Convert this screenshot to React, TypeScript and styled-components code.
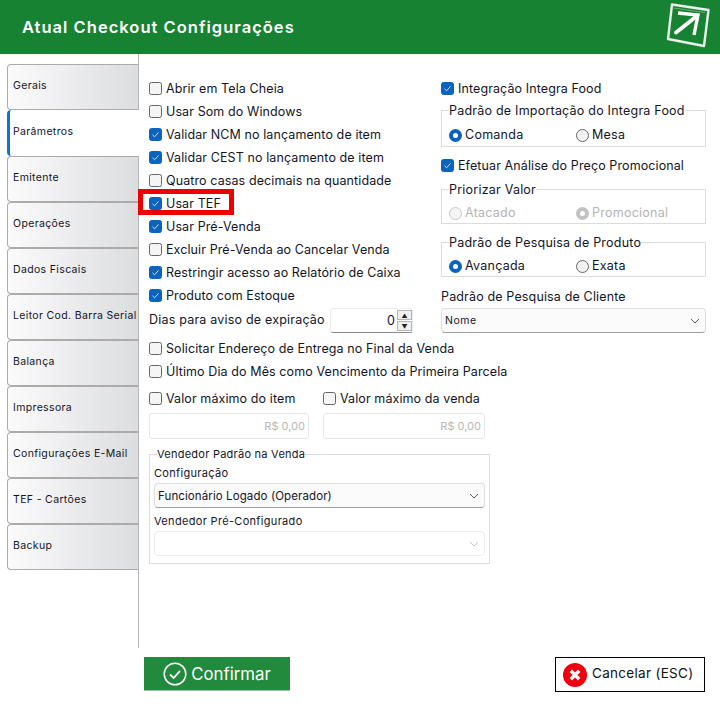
import React from 'react';
import styled, { createGlobalStyle } from 'styled-components';

const GlobalStyle = createGlobalStyle`
  html, body {
    margin: 0;
    padding: 0;
    background: #fff;
  }
  body {
    font-family: 'Inter', 'Liberation Sans', sans-serif;
    color: #14141f;
  }
`;

const tabs = [
  'Gerais',
  'Parâmetros',
  'Emitente',
  'Operações',
  'Dados Fiscais',
  'Leitor Cod. Barra Serial',
  'Balança',
  'Impressora',
  'Configurações E-Mail',
  'TEF - Cartões',
  'Backup',
];

const topChecks: [string, boolean][] = [
  ['Abrir em Tela Cheia', false],
  ['Usar Som do Windows', false],
  ['Validar NCM no lançamento de item', true],
  ['Validar CEST no lançamento de item', true],
  ['Quatro casas decimais na quantidade', false],
  ['Usar TEF', true],
  ['Usar Pré-Venda', true],
  ['Excluir Pré-Venda ao Cancelar Venda', false],
  ['Restringir acesso ao Relatório de Caixa', true],
  ['Produto com Estoque', true],
];

const Check = ({ label, checked }: { label: string; checked?: boolean }) => (
  <CheckRow>
    <CheckBox $checked={checked}>
      {checked && (
        <svg width="9" height="9" viewBox="0 0 9 9" fill="none" stroke="#cfe0f5" strokeWidth="1">
          <path d="M1.5 4.8 L3.6 6.8 L7.5 2.4" />
        </svg>
      )}
    </CheckBox>
    {label}
  </CheckRow>
);

const Radio = ({ label, checked, disabled }: { label: string; checked?: boolean; disabled?: boolean }) => (
  <RadioItem $disabled={disabled}>
    <RadioDot $checked={checked} $disabled={disabled} />
    <span>{label}</span>
  </RadioItem>
);

const Chevron = ({ light }: { light?: boolean }) => (
  <svg width="10" height="6" viewBox="0 0 10 6" fill="none" stroke={light ? '#c4c4c4' : '#555'} strokeWidth="1">
    <path d="M1 1 L5 5 L9 1" />
  </svg>
);

const App = () => {
  return (
    <Page>
      <GlobalStyle />
      <Header>
        <Title>Atual Checkout Configurações</Title>
        <svg width="48" height="48" viewBox="0 0 48 48" fill="none">
          <path d="M10 1.5 L46.5 7 L42 43 L6 36 Z" stroke="#fff" strokeWidth="2.4" strokeLinejoin="round" opacity="0.9" />
          <path d="M11.5 5 L43 9.5" stroke="#fff" strokeWidth="0.8" opacity="0.45" />
          <path d="M14 29.5 L33 14.5" stroke="#fff" strokeWidth="3.8" strokeLinecap="round" />
          <path d="M16 10 L36 12 L32 32" stroke="#fff" strokeWidth="3.4" />
        </svg>
      </Header>

      <Main>
        <Sidebar>
          {tabs.map((t, i) => (
            <Tab key={t} $active={i === 1}>
              {t}
            </Tab>
          ))}
        </Sidebar>

        <Content>
          <LeftColumn>
            {topChecks.map(([label, checked]) => (
              <Check key={label} label={label} checked={checked} />
            ))}
            <DaysRow>
              <DaysLabel>Dias para aviso de expiração</DaysLabel>
              <SpinBox>
                <SpinValue>0</SpinValue>
                <SpinButtons>
                  <SpinButton>▲</SpinButton>
                  <SpinButton>▼</SpinButton>
                </SpinButtons>
              </SpinBox>
            </DaysRow>
            <Check label="Solicitar Endereço de Entrega no Final da Venda" />
            <Check label="Último Dia do Mês como Vencimento da Primeira Parcela" />
            <MaxGrid>
              <Check label="Valor máximo do item" />
              <Check label="Valor máximo da venda" />
              <MoneyInput>R$ 0,00</MoneyInput>
              <MoneyInput>R$ 0,00</MoneyInput>
            </MaxGrid>
            <SellerGroup>
              <SellerLegend>Vendedor Padrão na Venda</SellerLegend>
              <SmallLabel>Configuração</SmallLabel>
              <SelectBox>
                Funcionário Logado (Operador)
                <Chevron />
              </SelectBox>
              <SmallLabel>Vendedor Pré-Configurado</SmallLabel>
              <SelectBox $disabled>
                &nbsp;
                <Chevron light />
              </SelectBox>
            </SellerGroup>
          </LeftColumn>

          <RightColumn>
            <Check label="Integração Integra Food" checked />
            <Group $top={3}>
              <GroupLegend>Padrão de Importação do Integra Food</GroupLegend>
              <RadioRow>
                <Radio label="Comanda" checked />
                <Radio label="Mesa" />
              </RadioRow>
            </Group>
            <PromoRow>
              <Check label="Efetuar Análise do Preço Promocional" checked />
            </PromoRow>
            <Group>
              <GroupLegend>Priorizar Valor</GroupLegend>
              <RadioRow $short>
                <Radio label="Atacado" disabled />
                <Radio label="Promocional" checked disabled />
              </RadioRow>
            </Group>
            <Group $top={11}>
              <GroupLegend>Padrão de Pesquisa de Produto</GroupLegend>
              <RadioRow $short>
                <Radio label="Avançada" checked />
                <Radio label="Exata" />
              </RadioRow>
            </Group>
            <ClientLabel>Padrão de Pesquisa de Cliente</ClientLabel>
            <SelectBox $small>
              Nome
              <Chevron />
            </SelectBox>
          </RightColumn>

          <Highlight />
        </Content>
      </Main>

      <Footer>
        <ConfirmButton>
          <svg width="24" height="24" viewBox="0 0 24 24" fill="none" stroke="#fff">
            <circle cx="12" cy="12" r="10.8" strokeWidth="1.5" />
            <path d="M7 12.5 L10.6 16 L17 8.8" strokeWidth="1.8" />
          </svg>
          Confirmar
        </ConfirmButton>
        <CancelButton>
          <svg width="24" height="24" viewBox="0 0 24 24" fill="none">
            <circle cx="12" cy="12" r="12" fill="#f0000f" />
            <path d="M7.8 7.8 L16.2 16.2 M16.2 7.8 L7.8 16.2" stroke="#fff" strokeWidth="3.4" />
          </svg>
          <CancelText>Cancelar (ESC)</CancelText>
        </CancelButton>
      </Footer>
    </Page>
  );
};

export default App;

const Page = styled.div`
  width: 720px;
  height: 704px;
  overflow: hidden;
  display: flex;
  flex-direction: column;
  font-size: 12.5px;
`;

const Header = styled.header`
  height: 54px;
  flex: none;
  background: #178231;
  display: flex;
  align-items: center;
  justify-content: space-between;
  padding: 0 10px 0 22px;
  box-sizing: border-box;
`;

const Title = styled.h1`
  margin: 0;
  font-size: 16.5px;
  font-weight: 600;
  letter-spacing: 1.02px;
  color: #fff;
`;

const Main = styled.div`
  display: flex;
  height: 594px;
  flex: none;
`;

const Sidebar = styled.nav`
  width: 132px;
  box-sizing: border-box;
  margin-left: 7px;
  padding-top: 10px;
  display: flex;
  flex-direction: column;
  border-right: 1px solid #b4b4b4;
`;

const Tab = styled.div<{ $active?: boolean }>`
  height: 46px;
  flex: none;
  box-sizing: border-box;
  display: flex;
  align-items: center;
  padding: 0 0 3px 5px;
  white-space: nowrap;
  font-size: 10.5px;
  letter-spacing: 0.35px;
  color: #14141f;
  border-radius: 4px 0 0 4px;
  margin-right: ${(p) => (p.$active ? '-1px' : '0')};
  background: ${(p) => (p.$active ? '#fff' : 'linear-gradient(90deg, #fbfbfc, #dcdddf)')};
  border: 1px solid #ababab;
  border-right: none;
  ${(p) => p.$active && 'border: none; border-left: 3px solid #0f73d6; padding-left: 3px;'}
`;

const Content = styled.div`
  position: relative;
  flex: 1;
  display: flex;
  padding: 23px 14px 0 10px;
  min-width: 0;
`;

const LeftColumn = styled.div`
  width: 341px;
  flex: none;
  display: flex;
  flex-direction: column;
`;

const RightColumn = styled.div`
  margin-left: -49px;
  width: 265px;
  flex: none;
  display: flex;
  flex-direction: column;
`;

const CheckRow = styled.label`
  height: 23px;
  flex: none;
  display: flex;
  align-items: center;
  gap: 4px;
  white-space: nowrap;
  letter-spacing: 0.1px;
`;

const CheckBox = styled.span<{ $checked?: boolean }>`
  width: 13px;
  height: 13px;
  flex: none;
  box-sizing: border-box;
  border-radius: 2.5px;
  display: flex;
  align-items: center;
  justify-content: center;
  background: ${(p) => (p.$checked ? '#0b63c0' : '#f5f5f5')};
  border: 1px solid ${(p) => (p.$checked ? '#0b63c0' : '#666')};
`;

const DaysRow = styled.div`
  height: 25px;
  margin: 1px 0 4px;
  display: flex;
  align-items: center;
  justify-content: space-between;
  width: 264px;
  white-space: nowrap;
`;

const DaysLabel = styled.span`
  margin-bottom: 2px;
  letter-spacing: 0.2px;
`;

const SpinBox = styled.div`
  width: 83px;
  height: 25px;
  box-sizing: border-box;
  display: flex;
  align-items: center;
  border: 1px solid #ececec;
  border-bottom: 1px solid #8a8a8a;
  border-radius: 3px;
`;

const SpinValue = styled.span`
  flex: 1;
  text-align: right;
  padding-right: 2px;
`;

const SpinButtons = styled.div`
  display: flex;
  flex-direction: column;
  gap: 1px;
`;

const SpinButton = styled.span`
  width: 15px;
  height: 10px;
  box-sizing: border-box;
  background: #f0f0f0;
  border: 1px solid #b5b5b5;
  font-size: 6px;
  line-height: 9px;
  text-align: center;
  color: #222;
`;

const MaxGrid = styled.div`
  margin-top: 4px;
  display: grid;
  grid-template-columns: 160px 162px;
  column-gap: 14px;
  row-gap: 3px;
`;

const MoneyInput = styled.div`
  height: 26px;
  box-sizing: border-box;
  border: 1px solid #e6e6e6;
  border-radius: 3px;
  display: flex;
  align-items: center;
  justify-content: flex-end;
  padding-right: 3px;
  font-size: 11px;
  color: #b8b8b8;
`;

const SellerGroup = styled.fieldset`
  margin: 8px 0 0;
  padding: 0 4px 7px;
  border: 1px solid #dcdcdc;
  min-width: 0;
  width: 341px;
  box-sizing: border-box;
`;

const SellerLegend = styled.legend`
  padding: 0;
  margin-left: 3px;
  font-size: 11px;
  line-height: 15px;
  letter-spacing: 0.25px;
`;

const SmallLabel = styled.div`
  font-size: 11px;
  height: 21px;
  display: flex;
  align-items: center;
  margin-top: 2px;
  letter-spacing: 0.32px;
  legend + & {
    margin-top: 0;
  }
`;

const SelectBox = styled.div<{ $disabled?: boolean; $small?: boolean }>`
  height: 25px;
  flex: none;
  box-sizing: border-box;
  display: flex;
  align-items: center;
  justify-content: space-between;
  padding: 0 5px 0 3px;
  font-size: ${(p) => (p.$small ? '10.5px' : '11.5px')};
  letter-spacing: ${(p) => (p.$small ? '0.5px' : '0.1px')};
  border-radius: 4px;
  background: ${(p) => (p.$disabled ? '#fff' : '#fbfbfb')};
  border: 1px solid ${(p) => (p.$disabled ? '#ececec' : '#dedede')};
  border-bottom-color: ${(p) => (p.$disabled ? '#ececec' : '#a0a0a0')};
`;

const Group = styled.fieldset<{ $top?: number }>`
  margin: ${(p) => p.$top ?? 0}px 0 0;
  padding: 0 7px;
  border: 1px solid #dcdcdc;
  min-width: 0;
  box-sizing: border-box;
`;

const GroupLegend = styled.legend`
  padding: 0;
  font-size: 12.5px;
  line-height: 15px;
  letter-spacing: 0.22px;
  white-space: nowrap;
`;

const RadioRow = styled.div<{ $short?: boolean }>`
  display: grid;
  grid-template-columns: 127px 1fr;
  box-sizing: border-box;
  height: ${(p) => (p.$short ? '26px' : '28px')};
  padding-top: 6px;
  align-items: center;
`;

const RadioItem = styled.div<{ $disabled?: boolean }>`
  display: flex;
  align-items: center;
  gap: 3px;
  letter-spacing: 0.25px;
  color: ${(p) => (p.$disabled ? '#b4b4b4' : 'inherit')};
  & > span:last-child {
    position: relative;
    top: -1px;
  }
`;

const RadioDot = styled.span<{ $checked?: boolean; $disabled?: boolean }>`
  width: 13px;
  height: 13px;
  box-sizing: border-box;
  border-radius: 50%;
  background: ${(p) => (p.$checked ? '#fff' : p.$disabled ? '#f5f5f5' : '#f3f3f3')};
  border: ${(p) => {
    const c = p.$disabled ? '#c2c2c2' : p.$checked ? '#0b63c0' : '#666';
    return p.$checked ? `4px solid ${c}` : `1px solid ${p.$disabled ? '#c8c8c8' : c}`;
  }};
`;

const PromoRow = styled.div`
  margin: 7px 0 5px;
`;

const ClientLabel = styled.div`
  height: 20px;
  margin: 9px 0 2px;
  display: flex;
  align-items: center;
  letter-spacing: 0.15px;
`;

const Highlight = styled.div`
  position: absolute;
  left: -1px;
  top: 135px;
  width: 96px;
  height: 26px;
  box-sizing: border-box;
  border: 5px solid #ee0000;
  pointer-events: none;
`;

const Footer = styled.footer`
  display: flex;
  justify-content: space-between;
  align-items: flex-start;
  padding: 9px 15px 0 144px;
`;

const ConfirmButton = styled.div`
  width: 146px;
  height: 34px;
  box-sizing: border-box;
  background: #218a3c;
  border-bottom: 1px solid #9db8a4;
  color: #fff;
  display: flex;
  align-items: center;
  justify-content: center;
  gap: 4px;
  font-size: 16.8px;
`;

const CancelButton = styled.div`
  width: 150px;
  height: 35px;
  box-sizing: border-box;
  border: 1px solid #000;
  display: flex;
  align-items: center;
  gap: 5px;
  padding-left: 7px;
  font-size: 13.5px;
  letter-spacing: 0.3px;
  color: #111;
`;

const CancelText = styled.span`
  margin-bottom: 4px;
`;
